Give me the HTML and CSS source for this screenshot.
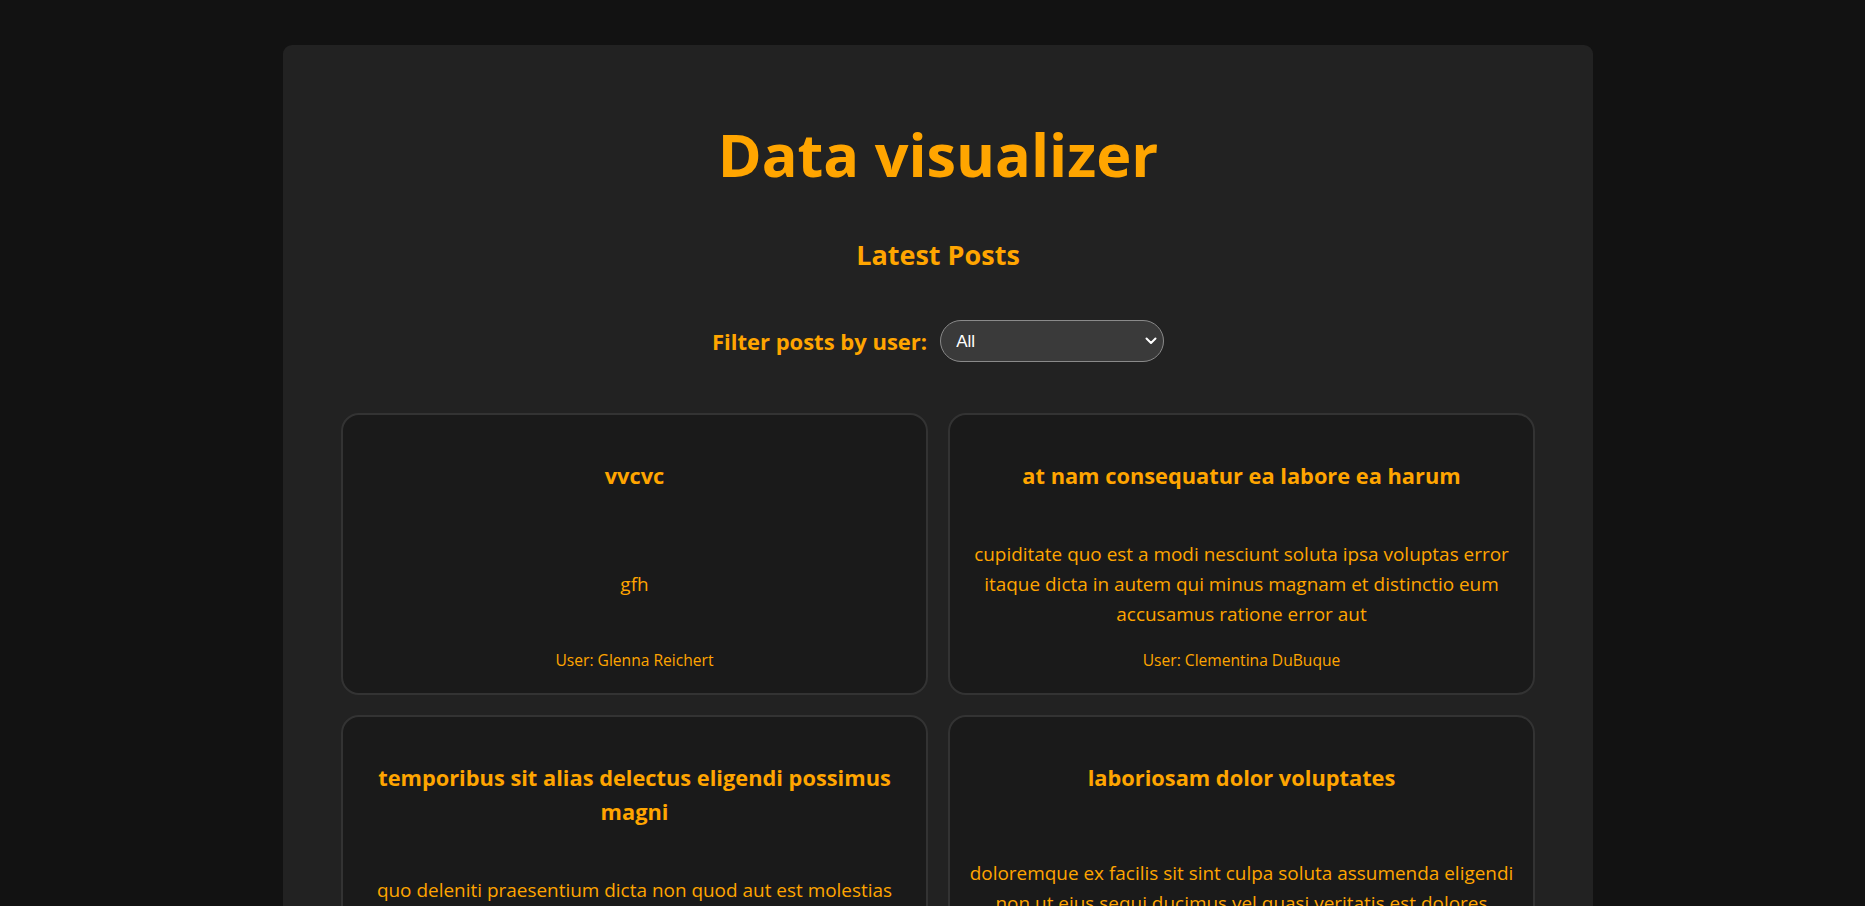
FILE: index.html
```html
<!DOCTYPE html>
<html lang="en">
<head>
<meta charset="utf-8">
<title>Data visualizer</title>
<link rel="stylesheet" href="styles.css">
</head>
<body>
<main class="app">
  <h1 class="app-title">Data visualizer</h1>
  <h2 class="section-title">Latest Posts</h2>
  <div class="filter">
    <label class="filter-label" for="user-filter">Filter posts by user:</label>
    <span class="select-wrap">
      <select id="user-filter" class="filter-select">
        <option>All</option>
        <option>Glenna Reichert</option>
        <option>Clementina DuBuque</option>
      </select>
      <svg class="select-chevron" width="12" height="8" viewBox="0 0 12 8" aria-hidden="true"><path d="M1.5 1.5 L6 6 L10.5 1.5" fill="none" stroke="#ffffff" stroke-width="2" stroke-linecap="round" stroke-linejoin="round"/></svg>
    </span>
  </div>
  <section class="posts">
    <article class="post">
      <h3 class="post-title">vvcvc</h3>
      <p class="post-body">gfh</p>
      <p class="post-user">User: Glenna Reichert</p>
    </article>
    <article class="post">
      <h3 class="post-title">at nam consequatur ea labore ea harum</h3>
      <p class="post-body">cupiditate quo est a modi nesciunt soluta ipsa voluptas error itaque dicta in autem qui minus magnam et distinctio eum accusamus ratione error aut</p>
      <p class="post-user">User: Clementina DuBuque</p>
    </article>
    <article class="post">
      <h3 class="post-title">temporibus sit alias delectus eligendi possimus magni</h3>
      <p class="post-body">quo deleniti praesentium dicta non quod aut est molestias molestias et officia quis nihil itaque dolorem quia</p>
      <p class="post-user">User: Ervin Howell</p>
    </article>
    <article class="post">
      <h3 class="post-title">laboriosam dolor voluptates</h3>
      <p class="post-body">doloremque ex facilis sit sint culpa soluta assumenda eligendi non ut eius sequi ducimus vel quasi veritatis est dolores</p>
      <p class="post-user">User: Ervin Howell</p>
    </article>
  </section>
</main>
</body>
</html>
```

FILE: styles.css
```css
html, body {
  margin: 0;
  background: #121212;
}
body {
  padding: 45px 0 40px 11px;
  font-family: "Open Sans", "Noto Sans", sans-serif;
  color: #ffa500;
}
.app {
  width: 1310px;
  box-sizing: border-box;
  margin: 0 auto;
  background: #222222;
  border-radius: 9px;
  padding: 69px 58px 40px 58px;
}
.app-title {
  margin: 0;
  text-align: center;
  font-size: 59.4px;
  line-height: 80px;
  font-weight: 700;
  color: #ffa500;
}
.section-title {
  margin: 43px 0 0;
  text-align: center;
  font-size: 27px;
  line-height: 36px;
  font-weight: 700;
  color: #ffa500;
}
.filter {
  margin-top: 47px;
  display: flex;
  justify-content: center;
  align-items: center;
  gap: 13px;
}
.filter-label {
  font-size: 22px;
  font-weight: 700;
  color: #ffa500;
}
.select-wrap {
  position: relative;
  display: inline-flex;
}
.filter-select {
  appearance: none;
  -webkit-appearance: none;
  width: 224px;
  height: 42px;
  box-sizing: border-box;
  border-radius: 21px;
  border: 1px solid #8a8a8a;
  background: #3a3a3a;
  color: #ffffff;
  font-family: "Liberation Sans", Arial, sans-serif;
  font-size: 17px;
  padding: 0 30px 0 15px;
  outline: none;
}
.select-chevron {
  position: absolute;
  right: 7px;
  top: 17px;
  pointer-events: none;
}
.posts {
  margin-top: 51px;
  display: grid;
  grid-template-columns: 1fr 1fr;
  gap: 20px;
}
.post {
  background: #1a1a1a;
  border: 2px solid #333333;
  border-radius: 18px;
  padding: 22px 16px 21px;
  display: flex;
  flex-direction: column;
  justify-content: space-between;
  text-align: center;
}
.post-title {
  margin: 22px 0 22px;
  font-size: 21.8px;
  line-height: 34px;
  font-weight: 700;
}
.post-body {
  margin: 24px 0 19px;
  font-size: 18.95px;
  line-height: 30px;
}
.post-user {
  margin: 0;
  font-size: 15.6px;
  line-height: 24px;
}
```
